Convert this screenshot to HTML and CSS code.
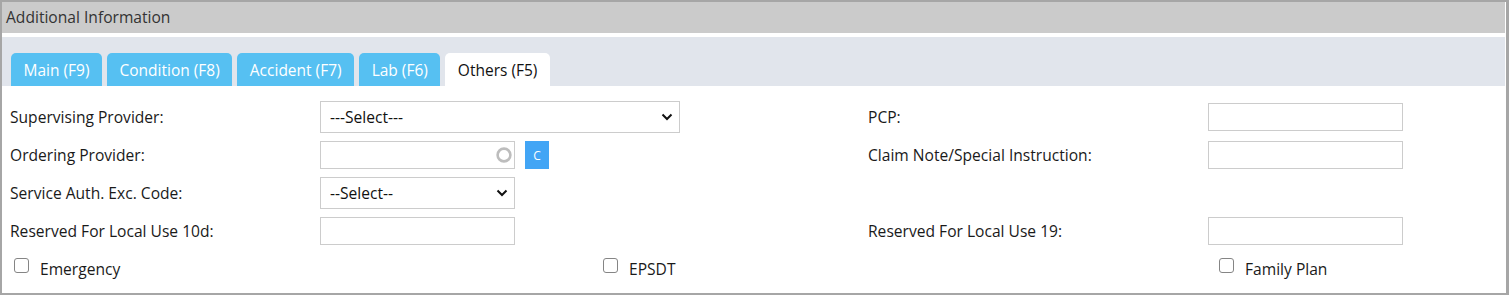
FILE: index.html
```html
<!DOCTYPE html>
<html>
<head>
    <title>Additional Information</title>
    <link rel="stylesheet" href="styles.css">
</head>
<body>
    <div class="panel">
        <div class="panel-title">Additional Information</div>
        <div class="tab-strip">
            <div class="tab">Main (F9)</div>
            <div class="tab">Condition (F8)</div>
            <div class="tab">Accident (F7)</div>
            <div class="tab">Lab (F6)</div>
            <div class="tab active">Others (F5)</div>
        </div>
        <div class="form-grid">
            <label class="field-label">Supervising Provider:</label>
            <div class="field">
                <span class="select-wrap wide">
                    <select><option>---Select---</option></select>
                    <svg class="chevron" width="12" height="8" viewBox="0 0 12 8"><path d="M1.5 1.5 L6 6 L10.5 1.5" fill="none" stroke="#111" stroke-width="2"/></svg>
                </span>
            </div>
            <label class="field-label">PCP:</label>
            <div class="field"><input type="text" class="text-input"></div>

            <label class="field-label">Ordering Provider:</label>
            <div class="field">
                <span class="search-wrap">
                    <input type="text" class="text-input">
                    <svg class="spinner" width="16" height="16" viewBox="0 0 16 16"><circle cx="8" cy="8" r="6.4" fill="none" stroke="#bdbdbd" stroke-width="2.6"/></svg>
                </span>
                <button class="clear-btn">C</button>
            </div>
            <label class="field-label">Claim Note/Special Instruction:</label>
            <div class="field"><input type="text" class="text-input"></div>

            <label class="field-label">Service Auth. Exc. Code:</label>
            <div class="field">
                <span class="select-wrap">
                    <select><option>--Select--</option></select>
                    <svg class="chevron" width="12" height="8" viewBox="0 0 12 8"><path d="M1.5 1.5 L6 6 L10.5 1.5" fill="none" stroke="#111" stroke-width="2"/></svg>
                </span>
            </div>
            <div></div>
            <div></div>

            <label class="field-label">Reserved For Local Use 10d:</label>
            <div class="field"><input type="text" class="text-input"></div>
            <label class="field-label">Reserved For Local Use 19:</label>
            <div class="field"><input type="text" class="text-input"></div>

            <div class="check-row">
                <label class="check"><input type="checkbox"> Emergency</label>
                <label class="check"><input type="checkbox"> EPSDT</label>
                <label class="check"><input type="checkbox"> Family Plan</label>
            </div>
        </div>
    </div>
</body>
</html>
```

FILE: styles.css
```css
body {
    margin: 0;
    font-family: "Open Sans", Arial, sans-serif;
    color: #1a1a1a;
}
.panel {
    height: 295px;
    box-sizing: border-box;
    border: 2px solid #a6a6a6;
    border-right-width: 3px;
    padding-right: 1px;
}
.panel-title {
    background-color: #cbcbcb;
    height: 31px;
    line-height: 31px;
    padding-left: 4px;
    font-size: 15.6px;
    color: #333;
}
.tab-strip {
    margin-top: 4px;
    background-color: #e1e5ec;
    height: 49px;
    box-sizing: border-box;
    padding: 16px 0 0 9px;
    display: flex;
    gap: 5px;
}
.tab {
    background-color: #56c0f2;
    color: #fff;
    font-size: 15.5px;
    height: 33px;
    line-height: 34px;
    padding: 0 12.5px;
    border-radius: 5px 5px 0 0;
}
.tab.active {
    background-color: #fff;
    color: #111;
}
.form-grid {
    display: grid;
    grid-template-columns: 310px 548px 340px 1fr;
    grid-auto-rows: 32px;
    row-gap: 6px;
    padding: 15px 0 0 8px;
    align-items: center;
}
.field-label {
    font-size: 15.6px;
    color: #1a1a1a;
}
.field {
    display: flex;
    align-items: center;
}
.text-input {
    width: 195px;
    height: 28px;
    box-sizing: border-box;
    border: 1px solid #cccccc;
    padding: 0 8px;
    font-family: inherit;
    font-size: 15px;
    outline: none;
}
.select-wrap {
    position: relative;
    display: inline-block;
    width: 195px;
}
.select-wrap.wide {
    width: 360px;
}
.select-wrap select {
    width: 100%;
    height: 32px;
    box-sizing: border-box;
    border: 1px solid #cccccc;
    background: #fff;
    padding: 0 9px;
    font-family: inherit;
    font-size: 15.6px;
    color: #111;
    appearance: none;
    -webkit-appearance: none;
    border-radius: 0;
}
.chevron {
    position: absolute;
    right: 7px;
    top: 12px;
}
.search-wrap {
    position: relative;
    display: inline-block;
    height: 28px;
}
.spinner {
    position: absolute;
    right: 3px;
    top: 6px;
}
.clear-btn {
    margin-left: 10px;
    width: 24px;
    height: 28px;
    border: none;
    padding: 0;
    background-color: #42a5f5;
    color: #fff;
    font-family: inherit;
    font-size: 12px;
}
.check-row {
    grid-column: 1 / -1;
    display: grid;
    grid-template-columns: 589px 616px 1fr;
    align-items: center;
}
.check {
    display: flex;
    align-items: center;
    font-size: 15.6px;
    color: #1a1a1a;
}
.check input {
    appearance: none;
    -webkit-appearance: none;
    flex: none;
    box-sizing: border-box;
    margin: 0 11px 7px 4px;
    width: 15px;
    height: 15px;
    border: 1px solid #858585;
    border-radius: 3px;
    background: #fff;
}
```
